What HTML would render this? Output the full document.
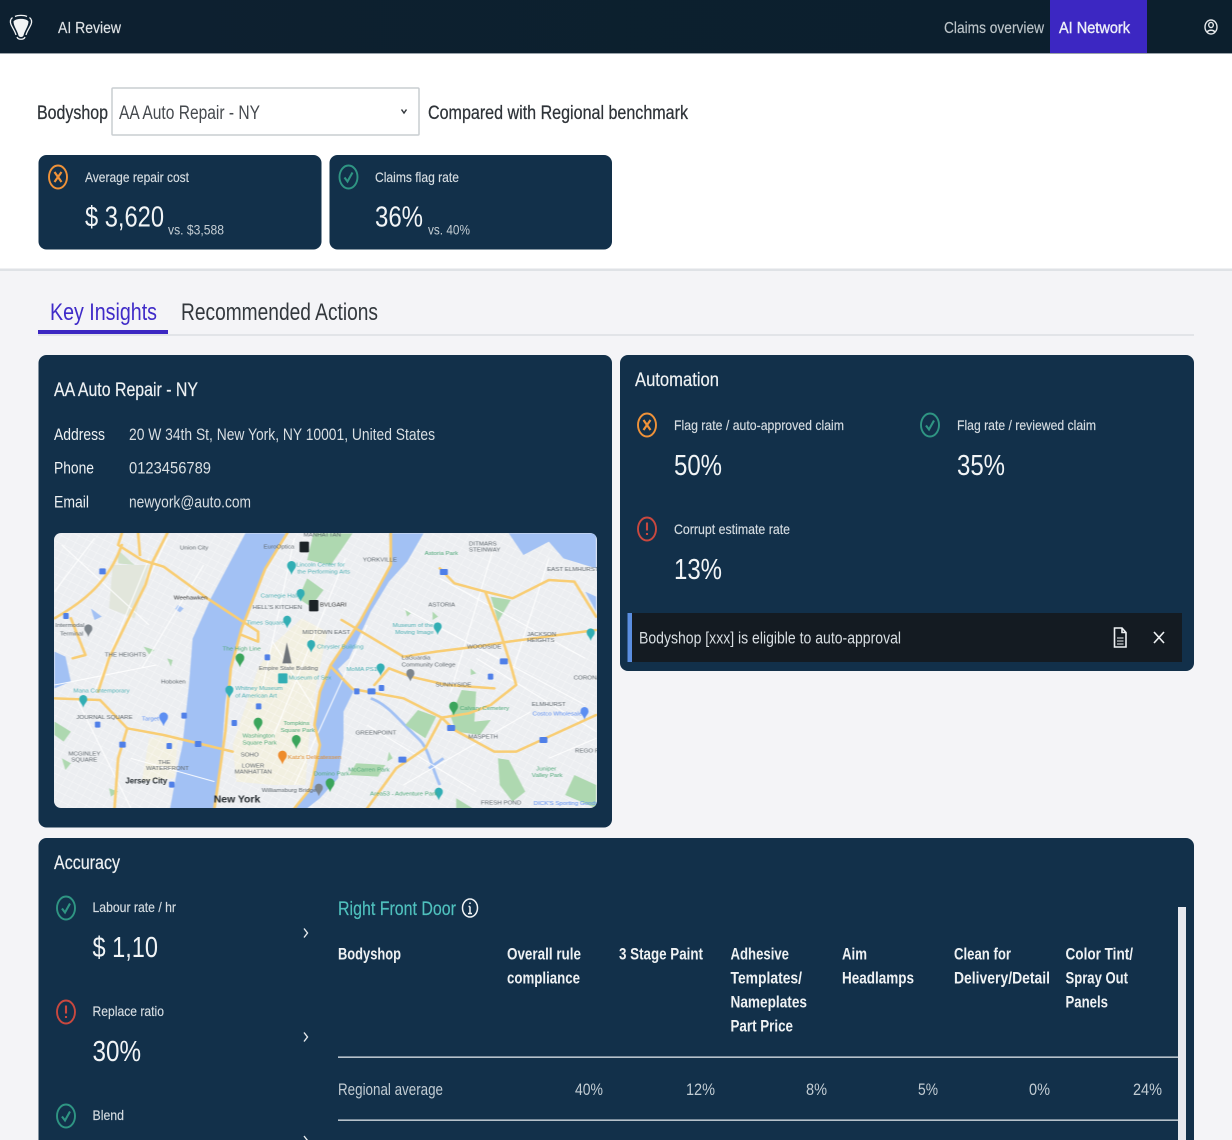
<!DOCTYPE html>
<html><head><meta charset="utf-8"><title>AI Review</title>
<style>
html,body{margin:0;padding:0;background:#fff;width:1232px;height:1140px;overflow:hidden}
svg{display:block;position:absolute;left:0;top:0;filter:blur(.3px)}
text{font-family:"Liberation Sans",sans-serif;fill:#e9edf0}
.hd{font-size:16px;fill:#dfe3e6;stroke:#dfe3e6;stroke-width:.15}
.dk{font-size:19px;fill:#2e3338;stroke:#2e3338;stroke-width:.25}
.lb{font-size:14px;fill:#d5dce1;stroke:#d5dce1;stroke-width:.15}
.bg{font-size:29px;fill:#f1f4f6}
.t{font-size:19px;fill:#eef1f3;stroke:#eef1f3;stroke-width:.2}
.b{font-size:17px;fill:#d9dfe3}
.th{font-size:16.5px;fill:#eef1f3;font-weight:bold}
.td{font-size:16.5px;fill:#c2ccd3}
.m text{font-size:17px;fill:#5f676d}
.m .w{fill:#4f94d8}.m .g{fill:#4fa878}.m .c{fill:#4fb0b4}
</style></head><body>
<svg width="1232" height="1140" viewBox="0 0 1232 1140" xmlns="http://www.w3.org/2000/svg">
<defs>
<clipPath id="mc"><rect x="54" y="533" width="543" height="275" rx="7"/></clipPath>
<linearGradient id="hg" x1="0" x2="1" y1="0" y2="0"><stop offset="0" stop-color="#0d2030"/><stop offset="1" stop-color="#0c1f2d"/></linearGradient>
<pattern id="st" width="22" height="22" patternUnits="userSpaceOnUse" patternTransform="rotate(28)"><path d="M0 0H22M0 0V22" stroke="#fff" stroke-width="2" fill="none"/></pattern>
</defs>
<rect width="1232" height="1140" fill="#fff"/>
<rect y="270" width="1232" height="870" fill="#f4f4f7"/>
<rect y="268.500" width="1232" height="2.500" fill="#dfe2e6"/>
<!-- header -->
<rect width="1232" height="53" fill="url(#hg)"/>
<rect y="53" width="1232" height="1" fill="#9aa3aa"/>
<rect x="1050" width="97" height="53" fill="#3c27c2"/>
<g fill="none" stroke="#f2f4f5" stroke-width="1.300">
<path d="M15 16.500C18 15 24 15 27 16.500M12.500 17.500C10 19.500 10 22 11 24.500C12.500 28 15 31 16 35M29.500 17.500C32 19.500 32 22 31 24.500C29.500 28 27 31 26 35M17 37C18 40 24 40 25 37"/>
<path d="M13.500 21.500C15.500 18 26.500 18 28.500 21.500C28.500 26 24.500 31 23.500 35.500C23 37.500 19 37.500 18.500 35.500C17.500 31 13.500 26 13.500 21.500Z" fill="#f2f4f5" stroke="none"/>
</g>
<text x="58" y="33" class="hd" textLength="63" lengthAdjust="spacingAndGlyphs">AI Review</text>
<text x="944" y="33" class="hd" style="fill:#bcc4c9;stroke:#bcc4c9" textLength="100" lengthAdjust="spacingAndGlyphs">Claims overview</text>
<text x="1059" y="33" class="hd" style="fill:#eceef8;stroke:#eceef8;stroke-width:.4" textLength="71" lengthAdjust="spacingAndGlyphs">AI Network</text>
<g fill="none" stroke="#e6e9eb" stroke-width="1.400"><ellipse cx="1211" cy="27" rx="6" ry="7"/><ellipse cx="1211" cy="25" rx="2.300" ry="2.600"/><path d="M1207 32.500C1208 29.500 1214 29.500 1215 32.500"/></g>
<!-- select row -->
<text x="37" y="119" class="dk" textLength="71" lengthAdjust="spacingAndGlyphs">Bodyshop</text>
<rect x="112" y="88" width="307" height="47" fill="#fff" stroke="#c9cdd1" stroke-width="1.500" rx="1"/>
<text x="119" y="119" class="dk" style="fill:#45494e;stroke:none" textLength="141" lengthAdjust="spacingAndGlyphs">AA Auto Repair - NY</text>
<path d="M401.500 109.500L404 113L406.500 109.500" fill="none" stroke="#33383c" stroke-width="1.500"/>
<text x="428" y="119" class="dk" textLength="260" lengthAdjust="spacingAndGlyphs">Compared with Regional benchmark</text>
<!-- stat cards -->
<rect x="38.500" y="155" width="283" height="94.500" rx="8" fill="#12304a"/>
<rect x="329.500" y="155" width="282.500" height="94.500" rx="8" fill="#12304a"/>
<g fill="none" stroke-width="1.900">
<ellipse cx="58" cy="177" rx="9" ry="11.500" stroke="#ef9239"/><path d="M54.500 172L61.500 182M61.500 172L54.500 182" stroke="#ef9239" stroke-width="2.200"/>
<ellipse cx="348.500" cy="177" rx="9" ry="11.500" stroke="#2f9583"/><path d="M344.500 177.500L347.500 181.500L352.500 172.500" stroke="#2f9583" stroke-width="2.100"/>
</g>
<text x="85" y="182" class="lb" textLength="104" lengthAdjust="spacingAndGlyphs">Average repair cost</text>
<text x="85" y="226.500" class="bg" textLength="79" lengthAdjust="spacingAndGlyphs">$ 3,620</text>
<text x="168" y="234.500" class="lb" style="fill:#c4cdd3;stroke:none" textLength="56" lengthAdjust="spacingAndGlyphs">vs. $3,588</text>
<text x="375" y="182" class="lb" textLength="84" lengthAdjust="spacingAndGlyphs">Claims flag rate</text>
<text x="375" y="226.500" class="bg" textLength="48" lengthAdjust="spacingAndGlyphs">36%</text>
<text x="428" y="234.500" class="lb" style="fill:#c4cdd3;stroke:none" textLength="42" lengthAdjust="spacingAndGlyphs">vs. 40%</text>
<!-- tabs -->
<rect x="38" y="334" width="1156" height="2" fill="#e2e4e8"/>
<rect x="38" y="330" width="130" height="4" fill="#3c27c2"/>
<text x="50" y="320" style="font-size:24.500px;fill:#3f2bc8" textLength="107" lengthAdjust="spacingAndGlyphs">Key Insights</text>
<text x="181" y="320" style="font-size:24.500px;fill:#33383d" textLength="197" lengthAdjust="spacingAndGlyphs">Recommended Actions</text>
<!-- panels -->
<rect x="38.500" y="355" width="573.500" height="472.500" rx="8" fill="#12304a"/>
<rect x="620" y="355" width="574" height="316" rx="8" fill="#12304a"/>
<rect x="38.500" y="838" width="1155.500" height="330" rx="8" fill="#12304a"/>
<!-- bodyshop panel -->
<text x="54" y="396" class="t" textLength="144" lengthAdjust="spacingAndGlyphs">AA Auto Repair - NY</text>
<text x="54" y="440" class="b" style="fill:#eef1f3" textLength="51" lengthAdjust="spacingAndGlyphs">Address</text>
<text x="129" y="440" class="b" textLength="306" lengthAdjust="spacingAndGlyphs">20 W 34th St, New York, NY 10001, United States</text>
<text x="54" y="473.500" class="b" style="fill:#eef1f3" textLength="40" lengthAdjust="spacingAndGlyphs">Phone</text>
<text x="129" y="473.500" class="b" textLength="82" lengthAdjust="spacingAndGlyphs">0123456789</text>
<text x="54" y="507.500" class="b" style="fill:#eef1f3" textLength="35" lengthAdjust="spacingAndGlyphs">Email</text>
<text x="129" y="507.500" class="b" textLength="122" lengthAdjust="spacingAndGlyphs">newyork@auto.com</text>
<!-- map -->
<g clip-path="url(#mc)">
<rect x="54" y="533" width="543" height="275" fill="#eceef1"/>
<g transform="translate(40 525) scale(.3635 .3333)" class="m" style="filter:blur(1.100px)">
<!-- land tints -->
<g fill="#fbf1cf" opacity=".45">
<path d="M530 660L600 430L640 360L720 280L790 320L760 480L740 640L730 780L640 780L540 770Z"/>
<path d="M300 640L380 630L370 760L280 770Z"/>
</g>
<rect x="40" y="25" width="1490" height="825" fill="url(#st)" opacity=".75"/>
<path d="M200 120L300 120L260 280L190 250Z" fill="#e2e6dc"/>
<!-- water -->
<g fill="#a2c1f4">
<path d="M565 25L678 25L620 130L560 290L530 400L510 530L500 680L480 850L358 850L380 720L392 660L410 480L420 340L470 220Z"/>
<path d="M960 25L1055 25L1010 110L960 170L910 260L850 400L820 432L862 500L835 560L835 640L820 760L770 820L735 850L700 850L745 790L770 660L755 600L770 500L800 420L880 290L965 120Z"/>
<path d="M1290 25L1530 25L1530 130L1440 100L1400 50L1330 90Z"/>
<path d="M40 380L70 395L85 470L40 490Z"/>
<path d="M1500 200L1530 215L1530 260Z"/>
<path d="M140 250L170 275L150 285Z"/>
<path d="M380 240L395 250L385 262L372 252Z"/>
</g>
<path d="M910 520C960 540 990 590 1040 640C1070 670 1075 720 1100 780M1070 730L1110 700" fill="none" stroke="#a2c1f4" stroke-width="8"/>
<!-- parks -->
<g fill="#aed8b0">
<path d="M752 25L860 25L800 120L735 105Z"/>
<path d="M735 160L780 195L745 245L710 220Z"/>
<path d="M1240 215L1295 225L1260 290Z"/>
<path d="M1160 495L1200 500L1195 590L1240 585L1210 630L1145 620L1130 575Z"/>
<path d="M1040 555L1090 575L1060 640L1005 600Z"/>
<path d="M1260 700L1290 705L1335 800L1300 830L1265 780Z"/>
<path d="M1470 750L1530 780L1530 850L1445 810Z"/>
<path d="M40 590L85 620L65 650L40 630Z"/>
<path d="M870 715L950 720L930 755L850 750Z"/>
<path d="M1145 820L1190 850L1145 850Z"/>
<path d="M215 75L260 120L215 115Z" fill="#cfe0c9"/>
<path d="M285 365L315 375L300 388ZM350 400L365 405L360 425ZM60 700L85 715L70 735ZM190 790L215 800L195 815ZM960 680L970 700L955 710ZM1185 430L1200 445L1185 450ZM1080 260L1095 275L1080 285ZM1005 255L1020 265L1010 275Z"/>
</g>
<!-- minor streets -->
<g fill="none" stroke="#fff" stroke-width="3" opacity=".9">
<path d="M60 60L300 300M150 40L40 200M350 40L240 300M300 100L150 500M450 120L280 430M700 40L610 500M840 100L640 640M900 300L700 780M640 350L760 560M1000 250L1500 540M1100 160L1500 400M1250 60L1130 500M1400 100L1300 440M900 600L1200 800M1000 780L1350 560M1200 400L1530 620M100 520L250 850M250 700L480 770M40 480L320 420M1400 700L1530 640"/>
</g>
<!-- highways -->
<g fill="none" stroke="#f8cd74" stroke-width="7.500" stroke-linecap="round" stroke-linejoin="round">
<path d="M225 25L215 60L280 105L340 125L460 220L600 320L600 350L555 330"/>
<path d="M350 25L310 110L290 180L235 300L190 400L160 500"/>
<path d="M40 280C120 230 190 170 225 60"/>
<path d="M270 25L275 90"/>
<path d="M85 280L125 390L90 400"/>
<path d="M40 520L165 525L240 610L340 630L530 680"/>
<path d="M240 610L215 700L205 850"/>
<path d="M680 25L620 130L555 310L525 430L510 620L480 850"/>
<path d="M965 25L965 120L880 290L800 420L770 500L755 600L770 660L745 790L700 850"/>
<path d="M800 425L860 492L1000 520L1105 578L1180 565L1240 540L1310 480L1295 420L1260 300L1225 200L1140 175L1100 130"/>
<path d="M830 285L1000 395L1090 380L1200 365L1290 350L1530 315"/>
<path d="M1225 200L1300 220L1400 165L1470 170L1530 275"/>
<path d="M1105 578L1140 615L1250 680L1310 680L1390 640L1530 570"/>
<path d="M1105 578L1060 670L980 730L900 850"/>
<path d="M920 480L960 430L1020 455L1120 480L1250 490"/>
</g>
<!-- markers -->
<g fill="#1c2227">
<rect x="714" y="50" width="26" height="32" rx="3"/><rect x="740" y="225" width="26" height="34" rx="3"/>
</g>
<path d="M679 352L686 385L692 415H667L673 385Z" fill="#6f747a"/>
<g>
<path d="M692 108a12 13 0 0 1 12 14c0 10-9 14-12 28c-3-14-12-18-12-28a12 13 0 0 1 12-14Z" fill="#32aeb4"/>
<path d="M717 192a11 12 0 0 1 11 13c0 9-8 12-11 25c-3-13-11-16-11-25a11 12 0 0 1 11-13Z" fill="#32aeb4"/>
<path d="M680 272a11 12 0 0 1 11 13c0 9-8 12-11 25c-3-13-11-16-11-25a11 12 0 0 1 11-13Z" fill="#32aeb4"/>
<path d="M1094 292a11 12 0 0 1 11 13c0 9-8 12-11 25c-3-13-11-16-11-25a11 12 0 0 1 11-13Z" fill="#32aeb4"/>
<path d="M746 345a11 12 0 0 1 11 13c0 9-8 12-11 25c-3-13-11-16-11-25a11 12 0 0 1 11-13Z" fill="#32aeb4"/>
<path d="M937 415a11 12 0 0 1 11 13c0 9-8 12-11 25c-3-13-11-16-11-25a11 12 0 0 1 11-13Z" fill="#32aeb4"/>
<path d="M521 482a11 12 0 0 1 11 13c0 9-8 12-11 25c-3-13-11-16-11-25a11 12 0 0 1 11-13Z" fill="#32aeb4"/>
<path d="M119 510a11 12 0 0 1 11 13c0 9-8 12-11 25c-3-13-11-16-11-25a11 12 0 0 1 11-13Z" fill="#32aeb4"/>
<path d="M1097 788a11 12 0 0 1 11 13c0 9-8 12-11 25c-3-13-11-16-11-25a11 12 0 0 1 11-13Z" fill="#32aeb4"/>
<path d="M1515 310a11 12 0 0 1 11 13c0 9-8 12-11 25c-3-13-11-16-11-25a11 12 0 0 1 11-13Z" fill="#32aeb4"/>
<path d="M550 385a12 13 0 0 1 12 14c0 10-9 14-12 28c-3-14-12-18-12-28a12 13 0 0 1 12-14Z" fill="#3ba55c"/>
<path d="M600 578a12 13 0 0 1 12 14c0 10-9 14-12 28c-3-14-12-18-12-28a12 13 0 0 1 12-14Z" fill="#3ba55c"/>
<path d="M705 630a12 13 0 0 1 12 14c0 10-9 14-12 28c-3-14-12-18-12-28a12 13 0 0 1 12-14Z" fill="#3ba55c"/>
<path d="M798 760a12 13 0 0 1 12 14c0 10-9 14-12 28c-3-14-12-18-12-28a12 13 0 0 1 12-14Z" fill="#3ba55c"/>
<path d="M1138 530a12 13 0 0 1 12 14c0 10-9 14-12 28c-3-14-12-18-12-28a12 13 0 0 1 12-14Z" fill="#3ba55c"/>
<path d="M667 677a12 13 0 0 1 12 14c0 10-9 14-12 28c-3-14-12-18-12-28a12 13 0 0 1 12-14Z" fill="#ee8c2c"/>
<path d="M340 562a12 13 0 0 1 12 14c0 10-9 14-12 28c-3-14-12-18-12-28a12 13 0 0 1 12-14Z" fill="#5c8ef2"/>
<path d="M1498 546a11 12 0 0 1 11 13c0 9-8 12-11 25c-3-13-11-16-11-25a11 12 0 0 1 11-13Z" fill="#5c8ef2"/>
<path d="M133 298a11 12 0 0 1 11 13c0 9-8 12-11 25c-3-13-11-16-11-25a11 12 0 0 1 11-13Z" fill="#7d858c"/>
<path d="M1019 432a11 12 0 0 1 11 13c0 9-8 12-11 25c-3-13-11-16-11-25a11 12 0 0 1 11-13Z" fill="#7d858c"/>
<path d="M767 776a11 12 0 0 1 11 13c0 9-8 12-11 25c-3-13-11-16-11-25a11 12 0 0 1 11-13Z" fill="#7d858c"/>
<rect x="655" y="445" width="26" height="30" rx="3" fill="#32aeb4"/>
</g>
<g fill="#4f7fe8">
<rect x="64" y="264" width="15" height="18" rx="3"/><rect x="618" y="388" width="15" height="18" rx="3"/><rect x="594" y="535" width="15" height="18" rx="3"/><rect x="527" y="585" width="15" height="18" rx="3"/><rect x="348" y="654" width="15" height="18" rx="3"/><rect x="389" y="563" width="15" height="18" rx="3"/><rect x="151" y="590" width="15" height="18" rx="3"/><rect x="864" y="490" width="15" height="18" rx="3"/><rect x="932" y="480" width="15" height="18" rx="3"/><rect x="1232" y="446" width="15" height="18" rx="3"/><rect x="355" y="770" width="15" height="18" rx="3"/>
<rect x="1100" y="132" width="22" height="18" rx="3"/><rect x="163" y="130" width="18" height="18" rx="3"/><rect x="901" y="490" width="22" height="18" rx="3"/><rect x="1265" y="400" width="22" height="18" rx="3"/><rect x="1120" y="600" width="22" height="18" rx="3"/><rect x="1374" y="636" width="22" height="18" rx="3"/><rect x="986" y="695" width="22" height="18" rx="3"/><rect x="426" y="648" width="18" height="18" rx="3"/><rect x="218" y="650" width="18" height="18" rx="3"/>
</g>
<!-- labels -->
<text x="385" y="73">Union City</text><text x="368" y="223" style="fill:#333">Weehawken</text>
<text x="725" y="34">MANHATTAN</text><text x="888" y="110">YORKVILLE</text><text x="1180" y="62">DITMARS</text><text x="1180" y="80">STEINWAY</text>
<text x="1395" y="138">EAST ELMHURST</text><text x="615" y="71">EuroOptica</text><text x="770" y="245" style="fill:#333">BVLGARI</text>
<text x="1068" y="245">ASTORIA</text><text x="585" y="252">HELL'S KITCHEN</text><text x="722" y="327">MIDTOWN EAST</text>
<text x="178" y="395">THE HEIGHTS</text><text x="333" y="475">Hoboken</text><text x="602" y="435">Empire State Building</text>
<text x="1340" y="333">JACKSON</text><text x="1340" y="351">HEIGHTS</text><text x="1175" y="370">WOODSIDE</text>
<text x="1088" y="484">SUNNYSIDE</text><text x="1468" y="464">CORONA</text><text x="1353" y="543">ELMHURST</text>
<text x="100" y="582">JOURNAL SQUARE</text><text x="868" y="628">GREENPOINT</text><text x="1178" y="640">MASPETH</text><text x="1472" y="683">REGO PAR</text>
<text x="78" y="691">MCGINLEY</text><text x="86" y="709">SQUARE</text><text x="325" y="717">THE</text><text x="292" y="735">WATERFRONT</text>
<text x="552" y="694">SOHO</text><text x="555" y="727">LOWER</text><text x="535" y="745">MANHATTAN</text>
<text x="42" y="306">Intermodal</text><text x="55" y="331">Terminal</text><text x="995" y="404">LaGuardia</text><text x="995" y="425">Community College</text>
<text x="610" y="801">Williamsburg Bridge</text><text x="1213" y="838">FRESH POND</text>
<text x="235" y="776" style="font-size:25px;fill:#22282c;font-weight:bold" textLength="115" lengthAdjust="spacingAndGlyphs">Jersey City</text>
<text x="478" y="832" style="font-size:31px;fill:#22282c;font-weight:bold" textLength="128" lengthAdjust="spacingAndGlyphs">New York</text>
<text x="705" y="124" class="c">Lincoln Center for</text><text x="708" y="145" class="c">the Performing Arts</text>
<text x="607" y="218" class="c">Carnegie Hall</text><text x="568" y="298" class="c">Times Square</text><text x="762" y="371" class="c">Chrysler Building</text>
<text x="970" y="306" class="c">Museum of the</text><text x="977" y="327" class="c">Moving Image</text><text x="843" y="438" class="c">MoMA PS1</text>
<text x="684" y="464" class="c">Museum of Sex</text><text x="537" y="495" class="c">Whitney Museum</text><text x="537" y="517" class="c">of American Art</text><text x="92" y="502" class="c">Mana Contemporary</text>
<text x="908" y="812" class="g">Area53 - Adventure Park</text>
<text x="502" y="377" class="g">The High Line</text><text x="670" y="600" class="g">Tompkins</text><text x="662" y="621" class="g">Square Park</text>
<text x="557" y="638" class="g">Washington</text><text x="557" y="658" class="g">Square Park</text><text x="753" y="751" class="g">Domino Park</text><text x="848" y="740" class="g">McCarren Park</text>
<text x="1058" y="90" class="g">Astoria Park</text><text x="1155" y="555" class="g">Calvary Cemetery</text><text x="1365" y="737" class="g">Juniper</text><text x="1353" y="756" class="g">Valley Park</text>
<text x="682" y="702" style="fill:#e08a2c">Katz's Delicatessen</text><text x="280" y="587" class="w" style="fill:#5c8ef2">Target</text><text x="1355" y="572" class="w" style="fill:#5c8ef2">Costco Wholesale</text><text x="1358" y="840" class="w" style="fill:#5c8ef2">DICK'S Sporting Goods</text>
</g>
</g>
<!-- automation -->
<text x="635" y="386" class="t" textLength="84" lengthAdjust="spacingAndGlyphs">Automation</text>
<g fill="none" stroke-width="1.900">
<ellipse cx="647" cy="425" rx="9" ry="11.500" stroke="#ef9239"/><path d="M643.500 420L650.500 430M650.500 420L643.500 430" stroke="#ef9239" stroke-width="2.200"/>
<ellipse cx="930" cy="425" rx="9" ry="11.500" stroke="#2f9583"/><path d="M926 425.500L929 429.500L934 420.500" stroke="#2f9583" stroke-width="2.100"/>
<ellipse cx="647" cy="529" rx="9" ry="11.500" stroke="#c9483f"/><path d="M647 522.500V530.500M647 533V535" stroke="#c9483f" stroke-width="2.100"/>
</g>
<text x="674" y="430" class="lb" textLength="170" lengthAdjust="spacingAndGlyphs">Flag rate / auto-approved claim</text>
<text x="674" y="475" class="bg" textLength="48" lengthAdjust="spacingAndGlyphs">50%</text>
<text x="957" y="430" class="lb" textLength="139" lengthAdjust="spacingAndGlyphs">Flag rate / reviewed claim</text>
<text x="957" y="475" class="bg" textLength="48" lengthAdjust="spacingAndGlyphs">35%</text>
<text x="674" y="534" class="lb" textLength="116" lengthAdjust="spacingAndGlyphs">Corrupt estimate rate</text>
<text x="674" y="579" class="bg" textLength="48" lengthAdjust="spacingAndGlyphs">13%</text>
<rect x="627.500" y="613" width="554.500" height="49" fill="#141b22"/>
<rect x="627.500" y="613" width="4.500" height="49" fill="#5b8ee0"/>
<text x="639" y="643.500" class="b" textLength="262" lengthAdjust="spacingAndGlyphs">Bodyshop [xxx] is eligible to auto-approval</text>
<g fill="none" stroke="#eef1f3" stroke-width="1.600">
<path d="M1114.500 628H1122L1126 632.500V647H1114.500ZM1122 628V632.500H1126"/><path d="M1117 638H1123.500M1117 641H1123.500M1117 644H1123.500" stroke-width="1"/>
<path d="M1154 632L1164 643M1164 632L1154 643"/>
</g>
<!-- accuracy -->
<text x="54" y="869" class="t" textLength="66" lengthAdjust="spacingAndGlyphs">Accuracy</text>
<g fill="none" stroke-width="1.900">
<ellipse cx="66" cy="908" rx="9" ry="11.500" stroke="#2f9583"/><path d="M62 908.500L65 912.500L70 903.500" stroke="#2f9583" stroke-width="2.100"/>
<ellipse cx="66" cy="1012" rx="9" ry="11.500" stroke="#c9483f"/><path d="M66 1005.500V1013.500M66 1016V1018" stroke="#c9483f" stroke-width="2.100"/>
<ellipse cx="66" cy="1116" rx="9" ry="11.500" stroke="#2f9583"/><path d="M62 1116.500L65 1120.500L70 1111.500" stroke="#2f9583" stroke-width="2.100"/>
</g>
<text x="92.500" y="912" class="lb" textLength="83.500" lengthAdjust="spacingAndGlyphs">Labour rate / hr</text>
<text x="92.500" y="957" class="bg" textLength="65.500" lengthAdjust="spacingAndGlyphs">$ 1,10</text>
<text x="92.500" y="1016" class="lb" textLength="71.500" lengthAdjust="spacingAndGlyphs">Replace ratio</text>
<text x="92.500" y="1061" class="bg" textLength="48.500" lengthAdjust="spacingAndGlyphs">30%</text>
<text x="92.500" y="1120" class="lb" textLength="31.500" lengthAdjust="spacingAndGlyphs">Blend</text>
<g fill="none" stroke="#e6eaed" stroke-width="1.400">
<path d="M304 928.500L307.500 933L304 937.500M304 1032.500L307.500 1037L304 1041.500M304 1136L307.500 1140.500L304 1145"/>
</g>
<text x="338" y="915" class="t" style="fill:#4fc0bd;stroke:#4fc0bd" textLength="118" lengthAdjust="spacingAndGlyphs">Right Front Door</text>
<g fill="none" stroke="#f0f3f5" stroke-width="1.500"><ellipse cx="470" cy="908" rx="7.500" ry="9"/><path d="M470 906.500V913.500M468 913.500H472M468.500 906.500H470M470 902.500V904"/></g>
<g class="hdr">
<text x="338" y="959.500" class="th" textLength="63" lengthAdjust="spacingAndGlyphs">Bodyshop</text>
<text x="507" y="959.500" class="th" textLength="74" lengthAdjust="spacingAndGlyphs">Overall rule</text>
<text x="507" y="983.500" class="th" textLength="73" lengthAdjust="spacingAndGlyphs">compliance</text>
<text x="619" y="959.500" class="th" textLength="84" lengthAdjust="spacingAndGlyphs">3 Stage Paint</text>
<text x="730.500" y="959.500" class="th" textLength="58.500" lengthAdjust="spacingAndGlyphs">Adhesive</text>
<text x="730.500" y="983.500" class="th" textLength="71.500" lengthAdjust="spacingAndGlyphs">Templates/</text>
<text x="730.500" y="1007.500" class="th" textLength="76.500" lengthAdjust="spacingAndGlyphs">Nameplates</text>
<text x="730.500" y="1031.500" class="th" textLength="62.500" lengthAdjust="spacingAndGlyphs">Part Price</text>
<text x="842" y="959.500" class="th" textLength="25" lengthAdjust="spacingAndGlyphs">Aim</text>
<text x="842" y="983.500" class="th" textLength="72" lengthAdjust="spacingAndGlyphs">Headlamps</text>
<text x="954" y="959.500" class="th" textLength="57" lengthAdjust="spacingAndGlyphs">Clean for</text>
<text x="954" y="983.500" class="th" textLength="96" lengthAdjust="spacingAndGlyphs">Delivery/Detail</text>
<text x="1065.500" y="959.500" class="th" textLength="67.500" lengthAdjust="spacingAndGlyphs">Color Tint/</text>
<text x="1065.500" y="983.500" class="th" textLength="62.500" lengthAdjust="spacingAndGlyphs">Spray Out</text>
<text x="1065.500" y="1007.500" class="th" textLength="42.500" lengthAdjust="spacingAndGlyphs">Panels</text>
</g>
<rect x="338" y="1056.500" width="840" height="1.300" fill="#dfe5ea"/>
<rect x="338" y="1119.500" width="840" height="1.300" fill="#dfe5ea"/>
<text x="338" y="1095" class="td" textLength="105" lengthAdjust="spacingAndGlyphs">Regional average</text>
<text x="575" y="1095" class="td" textLength="28" lengthAdjust="spacingAndGlyphs">40%</text>
<text x="686" y="1095" class="td" textLength="29" lengthAdjust="spacingAndGlyphs">12%</text>
<text x="806" y="1095" class="td" textLength="21" lengthAdjust="spacingAndGlyphs">8%</text>
<text x="918" y="1095" class="td" textLength="20" lengthAdjust="spacingAndGlyphs">5%</text>
<text x="1029" y="1095" class="td" textLength="21" lengthAdjust="spacingAndGlyphs">0%</text>
<text x="1133" y="1095" class="td" textLength="29" lengthAdjust="spacingAndGlyphs">24%</text>
<rect x="1178" y="907" width="8" height="233" fill="#e6e8ee"/>
</svg>
</body></html>
